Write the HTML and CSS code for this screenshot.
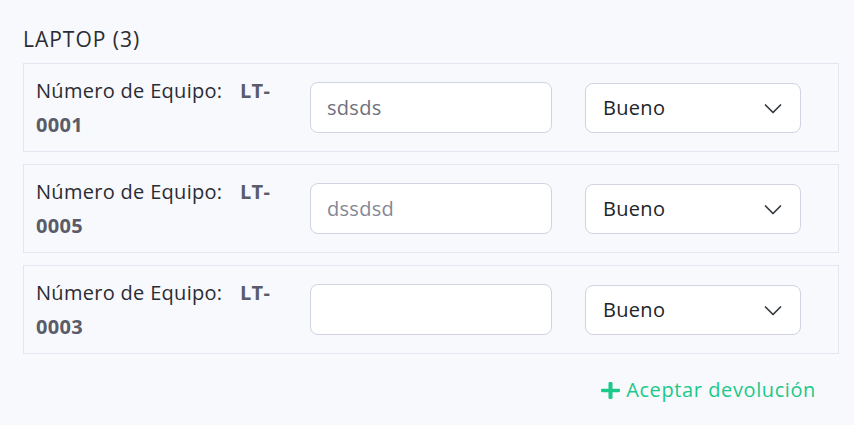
FILE: index.html
```html
<!DOCTYPE html>
<html lang="es">
<head>
<meta charset="utf-8">
<title>Devolución</title>
<link rel="stylesheet" href="styles.css">
</head>
<body>
<section class="group">
  <h2 class="group-title">LAPTOP (3)</h2>
  <div class="rows">
    <div class="item">
      <div class="item-label">Número de Equipo: <strong class="code">LT-<wbr>0001</strong></div>
      <input class="field" type="text" value="sdsds">
      <div class="select"><span>Bueno</span><svg class="chev" viewBox="0 0 16 12" width="20" height="15"><path d="M2 4l6 6 6-6" fill="none" stroke="#343a40" stroke-width="1.4" stroke-linecap="round" stroke-linejoin="round"/></svg></div>
    </div>
    <div class="item">
      <div class="item-label">Número de Equipo: <strong class="code">LT-<wbr>0005</strong></div>
      <input class="field light" type="text" value="dssdsd">
      <div class="select"><span>Bueno</span><svg class="chev" viewBox="0 0 16 12" width="20" height="15"><path d="M2 4l6 6 6-6" fill="none" stroke="#343a40" stroke-width="1.4" stroke-linecap="round" stroke-linejoin="round"/></svg></div>
    </div>
    <div class="item">
      <div class="item-label">Número de Equipo: <strong class="code">LT-<wbr>0003</strong></div>
      <input class="field" type="text" value="">
      <div class="select"><span>Bueno</span><svg class="chev" viewBox="0 0 16 12" width="20" height="15"><path d="M2 4l6 6 6-6" fill="none" stroke="#343a40" stroke-width="1.4" stroke-linecap="round" stroke-linejoin="round"/></svg></div>
    </div>
  </div>
  <div class="actions">
    <a class="accept" href="#"><svg class="plus" viewBox="0 32 448 448" width="19" height="17" preserveAspectRatio="none"><path fill="#1cc88a" d="M416 208H272V64c0-17.67-14.33-32-32-32h-32c-17.67 0-32 14.33-32 32v144H32c-17.67 0-32 14.33-32 32v32c0 17.67 14.33 32 32 32h144v144c0 17.67 14.33 32 32 32h32c17.67 0 32-14.33 32-32V304h144c17.67 0 32-14.33 32-32v-32c0-17.67-14.33-32-32-32z"/></svg><span>Aceptar devolución</span></a>
  </div>
</section>
</body>
</html>
```
FILE: styles.css
```css
* { box-sizing: border-box; }
html, body {
  margin: 0;
  background: #f8f9fc;
}
body {
  font-family: "Open Sans", "Noto Sans", sans-serif;
  font-size: 20px;
  letter-spacing: 0.3px;
  color: #2b2c33;
}
.group {
  width: 839px;
  padding: 22px 0 0 23px;
}
.group-title {
  margin: 0 0 7px;
  font-size: 21px;
  font-weight: 400;
  letter-spacing: 1px;
  line-height: 34px;
  color: #2b2c33;
}
.rows {
  display: flex;
  flex-direction: column;
  gap: 12px;
}
.item {
  height: 89px;
  border: 1px solid #e3e6f0;
  background: #f8f9fc;
  display: grid;
  grid-template-columns: 262px 242px 216px;
  column-gap: 12px;
  align-items: center;
  padding-left: 12px;
}
.item-label {
  line-height: 34px;
  color: #2b2c33;
}
.code {
  margin-left: 12px;
  font-weight: 700;
  color: #5a5c69;
}
.field {
  width: 242px;
  height: 51px;
  border: 1px solid #d1d3e2;
  border-radius: 8px;
  background: #fff;
  padding: 0 16px;
  font: inherit;
  letter-spacing: 0.3px;
  color: #6e707e;
  outline: none;
}
.field.light { color: #858796; }
.select {
  margin-left: 21px;
  width: 216px;
  height: 50px;
  border: 1px solid #d1d3e2;
  border-radius: 8px;
  background: #fff;
  display: flex;
  align-items: center;
  justify-content: space-between;
  padding: 0 17px 0 17px;
  color: #212529;
}
.chev { display: block; }
.actions {
  display: flex;
  justify-content: flex-end;
  padding-right: 23px;
  margin-top: 19px;
}
.accept {
  display: flex;
  align-items: center;
  gap: 6px;
  line-height: 34px;
  letter-spacing: 0.6px;
  color: #1cc88a;
  text-decoration: none;
}
.plus { display: block; }
```
